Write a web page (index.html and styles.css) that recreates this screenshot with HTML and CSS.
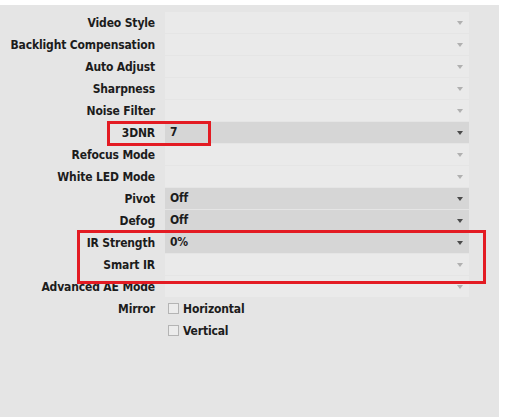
FILE: index.html
```html
<!DOCTYPE html>
<html lang="en">
<head>
    <meta charset="UTF-8">
    <meta name="viewport" content="width=device-width, initial-scale=1.0">
    <title>Image Settings</title>
    <link rel="stylesheet" href="styles.css">
</head>
<body>
    <div class="panel">
        <div class="row">
            <label class="label">Video Style</label>
            <div class="select disabled"></div>
        </div>
        <div class="row">
            <label class="label">Backlight Compensation</label>
            <div class="select disabled"></div>
        </div>
        <div class="row">
            <label class="label">Auto Adjust</label>
            <div class="select disabled"></div>
        </div>
        <div class="row">
            <label class="label">Sharpness</label>
            <div class="select disabled"></div>
        </div>
        <div class="row">
            <label class="label">Noise Filter</label>
            <div class="select disabled"></div>
        </div>
        <div class="row">
            <label class="label">3DNR</label>
            <div class="select">7</div>
        </div>
        <div class="row">
            <label class="label">Refocus Mode</label>
            <div class="select disabled"></div>
        </div>
        <div class="row">
            <label class="label">White LED Mode</label>
            <div class="select disabled"></div>
        </div>
        <div class="row">
            <label class="label">Pivot</label>
            <div class="select">Off</div>
        </div>
        <div class="row">
            <label class="label">Defog</label>
            <div class="select">Off</div>
        </div>
        <div class="row">
            <label class="label">IR Strength</label>
            <div class="select">0%</div>
        </div>
        <div class="row">
            <label class="label">Smart IR</label>
            <div class="select disabled"></div>
        </div>
        <div class="row">
            <label class="label">Advanced AE Mode</label>
            <div class="select disabled"></div>
        </div>
        <div class="row">
            <label class="label">Mirror</label>
            <label class="check"><span class="box"></span>Horizontal</label>
        </div>
        <div class="row">
            <span class="label"></span>
            <label class="check"><span class="box"></span>Vertical</label>
        </div>

        <!-- 标注框 -->
        <div class="mark mark-3dnr"></div>
        <div class="mark mark-ir"></div>
    </div>
</body>
</html>
```

FILE: styles.css
```css
body {
    margin: 0;
    background: #fff;
    font-family: "DejaVu Sans Condensed", "DejaVu Sans", sans-serif;
    font-stretch: condensed;
    font-weight: bold;
    font-size: 12px;
    letter-spacing: -0.15px;
    color: #1c1c1c;
}

/* 灰色面板 */
.panel {
    position: relative;
    margin-top: 5px;
    width: 499px;
    height: 405px;
    padding-top: 7px;
    background: #e5e5e5;
}

.row {
    display: flex;
    align-items: center;
    height: 21px;
    margin-bottom: 1px;
}

.label {
    flex: none;
    width: 155px;
    padding-right: 10px;
    text-align: right;
    white-space: nowrap;
}

/* 下拉框 */
.select {
    position: relative;
    flex: none;
    box-sizing: border-box;
    width: 304px;
    height: 21px;
    line-height: 21px;
    padding-left: 5px;
    background: #d6d6d6;
}

.select::after {
    content: "";
    position: absolute;
    right: 6px;
    top: 9px;
    border-left: 3px solid transparent;
    border-right: 3px solid transparent;
    border-top: 4px solid #4a4a4a;
}

.select.disabled {
    background: #eaeaea;
}

.select.disabled::after {
    border-top-color: #b0b0b0;
}

/* 复选框 */
.check {
    display: flex;
    align-items: center;
    gap: 4px;
    padding-left: 3px;
}

.check .box {
    box-sizing: border-box;
    width: 11px;
    height: 11px;
    border: 1px solid #b4b4b4;
    background: #ececec;
}

/* 红色标注框 */
.mark {
    position: absolute;
    border: 3px solid #e31b23;
}

.mark-3dnr {
    left: 107px;
    top: 116px;
    width: 98px;
    height: 19px;
}

.mark-ir {
    left: 77px;
    top: 225px;
    width: 403px;
    height: 48px;
}
```
